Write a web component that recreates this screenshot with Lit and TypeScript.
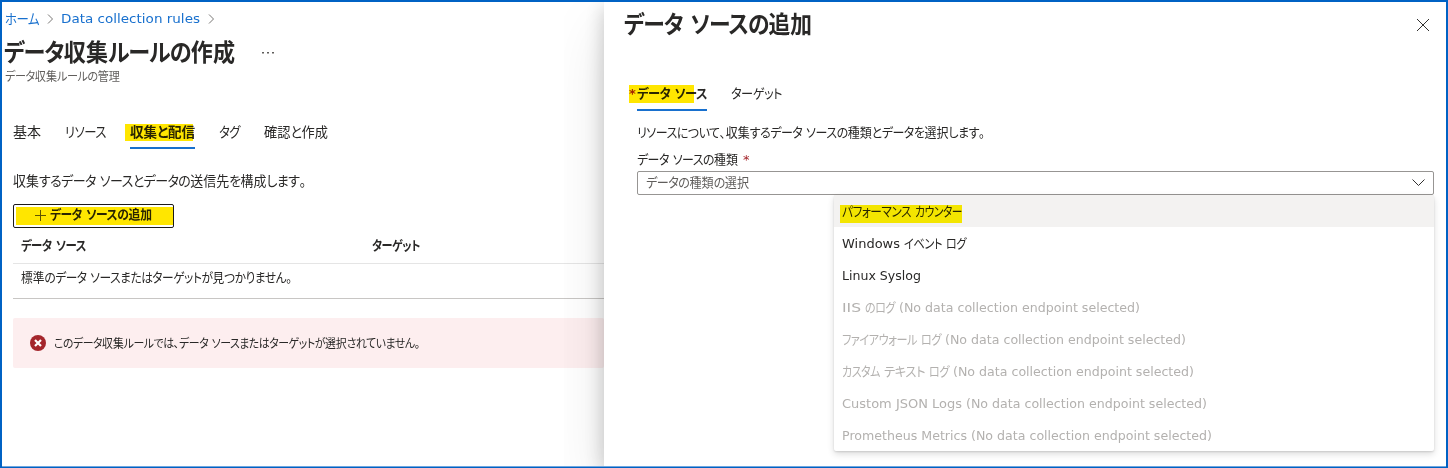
import { LitElement, html, css, svg } from "lit";
import { customElement, property, state } from "lit/decorators.js";
import { classMap } from "lit/directives/class-map.js";
import { styleMap } from "lit/directives/style-map.js";

/** A single line of text condensed or widened to an exact measure. */
@customElement("fit-text")
class FitText extends LitElement {
  @property() text = "";
  @property({ type: Number }) width = 100;
  @state() private scale = 1;

  static styles = css`
    :host { display: block; flex: none; white-space: pre; }
    .line { display: inline-block; transform-origin: 0 50%; vertical-align: top; }
    .kana { letter-spacing: -0.04em; }
  `;

  firstUpdated() {
    const line = this.renderRoot.querySelector(".line") as HTMLElement;
    this.scale = this.width / line.getBoundingClientRect().width;
  }

  render() {
    const runs = this.text.split(/([\u3040-\u30ff]+)/).filter(Boolean);
    return html`<div style=${styleMap({ width: `${this.width}px` })}><span class="line" style=${styleMap({ transform: `scaleX(${this.scale})` })}>${runs.map((r) => /[\u3040-\u30ff]/.test(r) ? html`<span class="kana">${r}</span>` : html`<span>${r}</span>`)}</span></div>`;
  }
}

const fit = (text: string, width: number) => html`<fit-text .text=${text} .width=${width}></fit-text>`;

const crumbArrow = html`<svg class="crumb-arrow" width="7" height="12" viewBox="0 0 7 12">${svg`<path d="M1 1.5 5.5 6 1 10.5" fill="none" stroke="#797775"/>`}</svg>`;

const LEFT_TABS = [
  { label: "基本", width: 28 },
  { label: "リソース", width: 41 },
  { label: "収集と配信", width: 65, active: true },
  { label: "タグ", width: 21 },
  { label: "確認と作成", width: 64 },
];

type Run = [text: string, width: number];
const NO_ENDPOINT: Run = ["(No data collection endpoint selected)", 241];

const OPTIONS: { runs: Run[]; marked?: boolean; disabled?: boolean }[] = [
  { runs: [["パフォーマンス", 69], ["カウンター", 47]], marked: true },
  { runs: [["Windows", 58], ["イベント", 38], ["ログ", 20]] },
  { runs: [["Linux Syslog", 79]] },
  { runs: [["IIS", 19], ["のログ", 30], NO_ENDPOINT], disabled: true },
  { runs: [["ファイアウォール", 75], ["ログ", 20], NO_ENDPOINT], disabled: true },
  { runs: [["カスタム", 38], ["テキスト", 41], ["ログ", 20], NO_ENDPOINT], disabled: true },
  { runs: [["Custom JSON Logs", 120], NO_ENDPOINT], disabled: true },
  { runs: [["Prometheus Metrics", 125], NO_ENDPOINT], disabled: true },
];

@customElement("app-root")
class AppRoot extends LitElement {
  static styles = css`
    :host {
      display: block; box-sizing: border-box; width: 1448px; height: 468px; overflow: hidden;
      border: 2px solid #0062c4; border-bottom-width: 1px; background: #fff; color: #292827;
      font: 13px/20px "DejaVu Sans", "Noto Sans CJK JP", sans-serif;
      font-feature-settings: "palt";
    }
    .shell { display: grid; grid-template-columns: 602px 1fr; height: 465px; box-sizing: border-box; border-bottom: 1px solid #6fa6de; }
    .main { padding: 7px 0 0 11px; overflow: hidden; }
    .crumbs { display: flex; align-items: center; height: 20px; margin-left: -8px; color: #1870ce; }
    .crumbs fit-text { font-size: 13px; }
    .crumbs fit-text:first-child { font-size: 14px; }
    .crumb-arrow { margin: 0 7px 0 8px; }
    .title-row { display: flex; align-items: center; height: 34px; margin: 6px 0 0 -9px; }
    h1, h2 { margin: 0; font-size: 24px; line-height: 34px; font-weight: 700; }
    h1 { padding-top: 2px; }
    .more { margin: 2px 0 0 27px; }
    .subtitle { margin: 0 0 0 -8px; height: 16px; line-height: 16px; font-size: 12px; color: #605e5c; }
    .tabs { display: flex; gap: 24px; }
    .main .tabs { margin-top: 37px; font-size: 14px; }
    .tab { position: relative; height: 27px; line-height: 20px; box-sizing: border-box; }
    .tab.active { font-weight: 700; border-bottom: 2px solid #1870ce; }
    .mark { position: absolute; background: #ffe600; mix-blend-mode: multiply; pointer-events: none; }
    .mark.main-tab { left: -5px; right: 2px; top: 2px; height: 17px; }
    .lead { margin-top: 22px; height: 20px; font-size: 14px; }
    .add {
      position: relative; display: flex; align-items: center; box-sizing: border-box; width: 161px; height: 24px;
      margin: 13px 0 0; padding: 0 0 2px 21px; border: 1px solid #1b1a19; border-radius: 2px; background: #fff;
      color: inherit; font: inherit; font-weight: 700; font-feature-settings: inherit;
    }
    .add svg { margin-right: 4px; }
    .mark.button { left: 2px; right: 0; top: 2px; height: 18px; }
    .head { display: flex; height: 36px; line-height: 35px; padding-left: 8px; border-bottom: 1px solid #e5e5e5; font-weight: 700; box-sizing: border-box; }
    .head > :first-child { width: 351px; }
    .empty { height: 35px; line-height: 28px; padding-left: 8px; border-bottom: 1px solid #c8c6c4; box-sizing: border-box; }
    .error { display: flex; align-items: center; margin-top: 19px; padding-left: 17px; height: 50px; border-radius: 2px; background: #fdeeef; font-size: 12px; }
    .error svg { margin-right: 8px; }
    .error fit-text { padding-top: 2px; }
    .panel {
      position: relative; background: #fff; padding: 6px 12px 0 20px;
      box-shadow: 0 26px 58px rgba(0,0,0,.1), 0 5px 20px rgba(0,0,0,.22);
      clip-path: inset(0 0 0 -40px);
    }
    .panel-head { display: flex; justify-content: space-between; align-items: center; height: 34px; padding-right: 5px; }
    .body { padding-left: 13px; }
    .body .tabs { margin-top: 42px; }
    .required { color: #a4262c; }
    .tab .required { position: absolute; left: -8px; top: 0; }
    .mark.panel-tab { left: -8px; width: 65px; top: 1px; height: 18px; }
    .panel-lead { margin-top: 12px; height: 20px; }
    .label { display: flex; gap: 5px; margin-top: 7px; height: 20px; }
    .select { position: relative; margin-top: 1px; height: 24px; box-sizing: border-box; border: 1px solid #979593; border-radius: 2px; }
    .value { display: flex; justify-content: space-between; align-items: center; height: 22px; padding: 0 8px; color: #605e5c; }
    .menu {
      position: absolute; right: -1px; top: 23px; width: 600px; background: #fff; border-radius: 2px;
      box-shadow: 0 3px 7px rgba(0,0,0,.14), 0 1px 2px rgba(0,0,0,.12);
    }
    .option { position: relative; display: flex; gap: 4px; height: 32px; line-height: 32px; padding: 1px 0 0 8px; box-sizing: border-box; }
    .option.marked { background: #f3f2f1; }
    .option.disabled { color: #b3b1af; }
    .mark.opt { left: 6px; top: 10px; width: 122px; height: 18px; background: #fff200; }
  `;

  render() {
    return html`<div class="shell">
      <main class="main">
        <nav class="crumbs">${fit("ホーム", 34)}${crumbArrow}${fit("Data collection rules", 139)}${crumbArrow}</nav>
        <div class="title-row">
          <h1>${fit("データ収集ルールの作成", 231)}</h1>
          <svg class="more" width="13" height="4" viewBox="0 0 13 4" fill="#605e5c">
            <rect x="0" y="1" width="2" height="1.5" /><rect x="5" y="1" width="2" height="1.5" /><rect x="10" y="1" width="2" height="1.5" />
          </svg>
        </div>
        <p class="subtitle">${fit("データ収集ルールの管理", 115)}</p>
        <div class="tabs">
          ${LEFT_TABS.map((t) => html`<div class=${classMap({ tab: true, active: !!t.active })}>
            ${fit(t.label, t.width)}${t.active ? html`<i class="mark main-tab"></i>` : ""}
          </div>`)}
        </div>
        <div class="lead">${fit("収集するデータ ソースとデータの送信先を構成します。", 293)}</div>
        <button class="add">
          <svg width="11" height="11" viewBox="0 0 11 11"><path d="M5.5 0v11M0 5.5h11" stroke="#605e5c" /></svg>
          ${fit("データ ソースの追加", 102)}<i class="mark button"></i>
        </button>
        <div class="head"><div>${fit("データ ソース", 65)}</div><div>${fit("ターゲット", 48)}</div></div>
        <div class="empty">${fit("標準のデータ ソースまたはターゲットが見つかりません。", 271)}</div>
        <div class="error">
          <svg width="16" height="16" viewBox="0 0 16 16"><circle cx="8" cy="8" r="8" fill="#a4262c" /><path d="m5 5 6 6m0-6-6 6" stroke="#fff" stroke-width="2.2" /></svg>
          ${fit("このデータ収集ルールでは、データ ソースまたはターゲットが選択されていません。", 366)}
        </div>
      </main>
      <section class="panel">
        <div class="panel-head">
          <h2>${fit("データ ソースの追加", 188)}</h2>
          <svg width="12" height="12" viewBox="0 0 12 12"><path d="m0 0 12 12M12 0 0 12" stroke="#323130" /></svg>
        </div>
        <div class="body">
          <div class="tabs">
            <div class="tab active"><span class="required">*</span>${fit("データ ソース", 70)}<i class="mark panel-tab"></i></div>
            <div class="tab">${fit("ターゲット", 51)}</div>
          </div>
          <div class="panel-lead">${fit("リソースについて、収集するデータ ソースの種類とデータを選択します。", 348)}</div>
          <div class="label">${fit("データ ソースの種類", 101)}<span class="required">*</span></div>
          <div class="select">
            <div class="value">${fit("データの種類の選択", 103)}
              <svg width="13" height="8" viewBox="0 0 13 8"><path d="m.5.5 6 6 6-6" fill="none" stroke="#323130" /></svg>
            </div>
            <div class="menu">
              ${OPTIONS.map((o) => html`<div class=${classMap({ option: true, marked: !!o.marked, disabled: !!o.disabled })}>
                ${o.runs.map(([text, width]) => fit(text, width))}${o.marked ? html`<i class="mark opt"></i>` : ""}
              </div>`)}
            </div>
          </div>
        </div>
      </section>
    </div>`;
  }
}
